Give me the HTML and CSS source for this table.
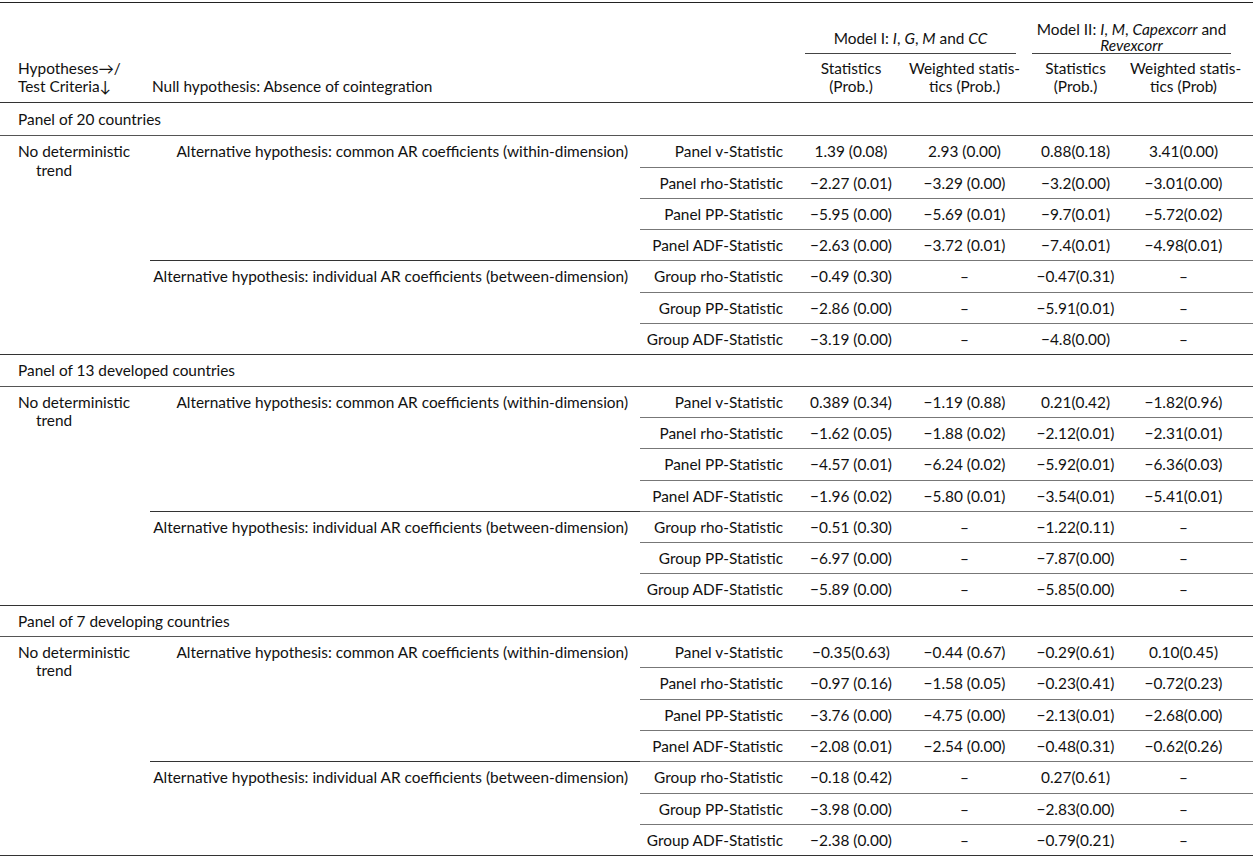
FILE: index.html
```html
<!DOCTYPE html>
<html lang="en">
<head>
  <meta charset="UTF-8" />
  <title>Panel cointegration tests</title>
  <link rel="stylesheet" href="styles.css">
</head>
<body>
  <table class="coint">
    <colgroup>
      <col class="c-crit">
      <col class="c-hyp">
      <col class="c-label">
      <col class="c-s1">
      <col class="c-w1">
      <col class="c-s2">
      <col class="c-w2">
    </colgroup>
    <thead>
      <tr class="head-top">
        <th rowspan="2" class="crit-head">Hypotheses<span class="arr">&rarr;</span>/<br>Test Criteria<span class="arr">&darr;</span></th>
        <th rowspan="2" colspan="2" class="null-head">Null hypothesis: Absence of cointegration</th>
        <th colspan="2" class="model"><div class="model-name model-one">Model I: <i>I</i>, <i>G</i>, <i>M</i> and <i>CC</i></div></th>
        <th colspan="2" class="model"><div class="model-name model-two">Model II: <i>I</i>, <i>M</i>, <i>Capexcorr</i> and <i>Revexcorr</i></div></th>
      </tr>
      <tr class="head-sub">
        <th>Statistics<br>(Prob.)</th>
        <th>Weighted statis-<br>tics (Prob.)</th>
        <th>Statistics<br>(Prob.)</th>
        <th class="last">Weighted statis-<br>tics (Prob)</th>
      </tr>
    </thead>

    <!-- Panel of 20 countries -->
    <tbody class="first">
      <tr class="panel-title"><td colspan="7">Panel of 20 countries</td></tr>
      <tr>
        <td rowspan="7" class="crit">No deterministic trend</td>
        <td rowspan="4" class="hyp">Alternative hypothesis: common AR coefficients (within-dimension)</td>
        <td class="label">Panel v-Statistic</td>
        <td>1.39 (0.08)</td><td>2.93 (0.00)</td><td>0.88(0.18)</td><td class="last">3.41(0.00)</td>
      </tr>
      <tr class="sep">
        <td class="label">Panel rho-Statistic</td>
        <td>&minus;2.27 (0.01)</td><td>&minus;3.29 (0.00)</td><td>&minus;3.2(0.00)</td><td class="last">&minus;3.01(0.00)</td>
      </tr>
      <tr class="sep">
        <td class="label">Panel PP-Statistic</td>
        <td>&minus;5.95 (0.00)</td><td>&minus;5.69 (0.01)</td><td>&minus;9.7(0.01)</td><td class="last">&minus;5.72(0.02)</td>
      </tr>
      <tr class="sep">
        <td class="label">Panel ADF-Statistic</td>
        <td>&minus;2.63 (0.00)</td><td>&minus;3.72 (0.01)</td><td>&minus;7.4(0.01)</td><td class="last">&minus;4.98(0.01)</td>
      </tr>
      <tr class="sep">
        <td rowspan="3" class="hyp">Alternative hypothesis: individual AR coefficients (between-dimension)</td>
        <td class="label">Group rho-Statistic</td>
        <td>&minus;0.49 (0.30)</td><td>&ndash;</td><td>&minus;0.47(0.31)</td><td class="last">&ndash;</td>
      </tr>
      <tr class="sep">
        <td class="label">Group PP-Statistic</td>
        <td>&minus;2.86 (0.00)</td><td>&ndash;</td><td>&minus;5.91(0.01)</td><td class="last">&ndash;</td>
      </tr>
      <tr class="sep">
        <td class="label">Group ADF-Statistic</td>
        <td>&minus;3.19 (0.00)</td><td>&ndash;</td><td>&minus;4.8(0.00)</td><td class="last">&ndash;</td>
      </tr>
    </tbody>

    <!-- Panel of 13 developed countries -->
    <tbody>
      <tr class="panel-title"><td colspan="7">Panel of 13 developed countries</td></tr>
      <tr>
        <td rowspan="7" class="crit">No deterministic trend</td>
        <td rowspan="4" class="hyp">Alternative hypothesis: common AR coefficients (within-dimension)</td>
        <td class="label">Panel v-Statistic</td>
        <td>0.389 (0.34)</td><td>&minus;1.19 (0.88)</td><td>0.21(0.42)</td><td class="last">&minus;1.82(0.96)</td>
      </tr>
      <tr class="sep">
        <td class="label">Panel rho-Statistic</td>
        <td>&minus;1.62 (0.05)</td><td>&minus;1.88 (0.02)</td><td>&minus;2.12(0.01)</td><td class="last">&minus;2.31(0.01)</td>
      </tr>
      <tr class="sep">
        <td class="label">Panel PP-Statistic</td>
        <td>&minus;4.57 (0.01)</td><td>&minus;6.24 (0.02)</td><td>&minus;5.92(0.01)</td><td class="last">&minus;6.36(0.03)</td>
      </tr>
      <tr class="sep">
        <td class="label">Panel ADF-Statistic</td>
        <td>&minus;1.96 (0.02)</td><td>&minus;5.80 (0.01)</td><td>&minus;3.54(0.01)</td><td class="last">&minus;5.41(0.01)</td>
      </tr>
      <tr class="sep">
        <td rowspan="3" class="hyp">Alternative hypothesis: individual AR coefficients (between-dimension)</td>
        <td class="label">Group rho-Statistic</td>
        <td>&minus;0.51 (0.30)</td><td>&ndash;</td><td>&minus;1.22(0.11)</td><td class="last">&ndash;</td>
      </tr>
      <tr class="sep">
        <td class="label">Group PP-Statistic</td>
        <td>&minus;6.97 (0.00)</td><td>&ndash;</td><td>&minus;7.87(0.00)</td><td class="last">&ndash;</td>
      </tr>
      <tr class="sep">
        <td class="label">Group ADF-Statistic</td>
        <td>&minus;5.89 (0.00)</td><td>&ndash;</td><td>&minus;5.85(0.00)</td><td class="last">&ndash;</td>
      </tr>
    </tbody>

    <!-- Panel of 7 developing countries -->
    <tbody>
      <tr class="panel-title"><td colspan="7">Panel of 7 developing countries</td></tr>
      <tr>
        <td rowspan="7" class="crit">No deterministic trend</td>
        <td rowspan="4" class="hyp">Alternative hypothesis: common AR coefficients (within-dimension)</td>
        <td class="label">Panel v-Statistic</td>
        <td>&minus;0.35(0.63)</td><td>&minus;0.44 (0.67)</td><td>&minus;0.29(0.61)</td><td class="last">0.10(0.45)</td>
      </tr>
      <tr class="sep">
        <td class="label">Panel rho-Statistic</td>
        <td>&minus;0.97 (0.16)</td><td>&minus;1.58 (0.05)</td><td>&minus;0.23(0.41)</td><td class="last">&minus;0.72(0.23)</td>
      </tr>
      <tr class="sep">
        <td class="label">Panel PP-Statistic</td>
        <td>&minus;3.76 (0.00)</td><td>&minus;4.75 (0.00)</td><td>&minus;2.13(0.01)</td><td class="last">&minus;2.68(0.00)</td>
      </tr>
      <tr class="sep">
        <td class="label">Panel ADF-Statistic</td>
        <td>&minus;2.08 (0.01)</td><td>&minus;2.54 (0.00)</td><td>&minus;0.48(0.31)</td><td class="last">&minus;0.62(0.26)</td>
      </tr>
      <tr class="sep">
        <td rowspan="3" class="hyp">Alternative hypothesis: individual AR coefficients (between-dimension)</td>
        <td class="label">Group rho-Statistic</td>
        <td>&minus;0.18 (0.42)</td><td>&ndash;</td><td>0.27(0.61)</td><td class="last">&ndash;</td>
      </tr>
      <tr class="sep">
        <td class="label">Group PP-Statistic</td>
        <td>&minus;3.98 (0.00)</td><td>&ndash;</td><td>&minus;2.83(0.00)</td><td class="last">&ndash;</td>
      </tr>
      <tr class="sep">
        <td class="label">Group ADF-Statistic</td>
        <td>&minus;2.38 (0.00)</td><td>&ndash;</td><td>&minus;0.79(0.21)</td><td class="last">&ndash;</td>
      </tr>
    </tbody>
  </table>
</body>
</html>
```

FILE: styles.css
```css
body {
  margin: 0;
  padding-top: 2px;
  background: #fff;
  color: #111;
  font-family: Lato, "Open Sans", sans-serif;
  font-size: 15.4px;
}
.coint {
  width: 1253px;
  border-collapse: collapse;
  table-layout: fixed;
}
.c-crit { width: 150px; }
.c-hyp { width: 490px; }
.c-label { width: 157px; }
.c-s1 { width: 108px; }
.c-w1 { width: 119px; }
.c-s2 { width: 103px; }
.c-w2 { width: 126px; }

th, td {
  padding: 6px 3px;
  line-height: 18.3px;
  font-weight: normal;
  text-align: center;
  vertical-align: top;
  white-space: nowrap;
}
td.last, th.last {
  padding-right: 16px;
}

/* header */
.coint thead tr.head-top th {
  border-top: 1px solid #222;
  padding-top: 18px;
  padding-bottom: 0;
  vertical-align: bottom;
}
thead th.model {
  white-space: normal;
}
.model-name {
  margin: 0 5px;
  line-height: 16px;
  border-bottom: 1px solid #444;
}
.model-one {
  padding-bottom: 7px;
}
thead th.model:last-child .model-name {
  margin-right: 19px;
}
.coint thead tr.head-sub th {
  padding-top: 5px;
  padding-bottom: 7px;
  line-height: 18px;
}
.coint thead tr.head-top th.crit-head,
.coint thead tr.head-top th.null-head {
  text-align: left;
  vertical-align: bottom;
  padding-bottom: 7px;
  line-height: 18px;
}
.coint thead th.crit-head {
  padding-left: 18px;
}
.coint thead th.null-head {
  padding-left: 2px;
}
.arr {
  line-height: 0;
}
thead tr:last-child th,
thead th[rowspan] {
  border-bottom: 1px solid #333;
}

/* body */
.panel-title td {
  text-align: left;
  padding-left: 18px;
  border-bottom: 1px solid #555;
}
tbody.first .panel-title td {
  padding-top: 7px;
  padding-bottom: 7px;
}
tbody {
  border-bottom: 1px solid #333;
}
td.crit {
  text-align: left;
  white-space: normal;
  padding-left: 36px;
  padding-right: 10px;
  text-indent: -18px;
}
td.hyp {
  text-align: right;
  padding-right: 12px;
}
td.label {
  text-align: right;
  padding-right: 14px;
}
tr.sep td {
  border-top: 1px solid #777;
}
tr.sep td.hyp {
  border-top-color: #333;
}
```
